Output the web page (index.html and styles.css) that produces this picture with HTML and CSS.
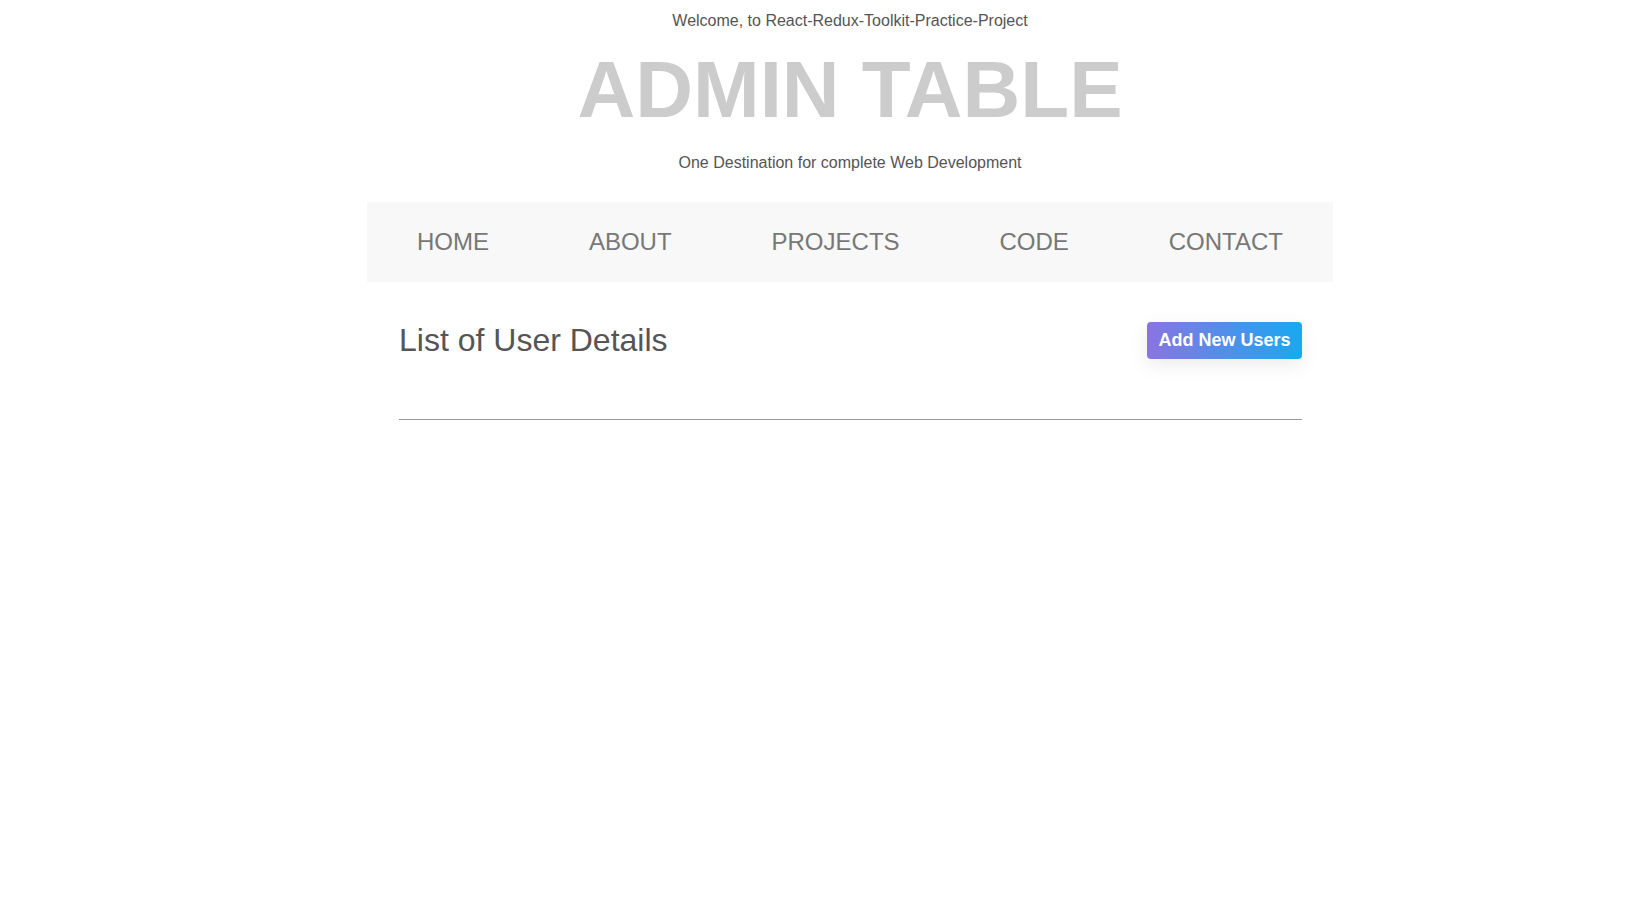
FILE: index.html
```html
<!DOCTYPE html>
<html>
<head>
<meta charset="utf-8">
<link rel="stylesheet" href="styles.css">
</head>
<body>
<div class="page">
  <header class="site-header">
    <p class="welcome">Welcome, to React-Redux-Toolkit-Practice-Project</p>
    <h1 class="title">ADMIN TABLE</h1>
    <p class="tagline">One Destination for complete Web Development</p>
  </header>
  <nav class="nav">
    <a class="nav-link" href="#">HOME</a>
    <a class="nav-link" href="#">ABOUT</a>
    <a class="nav-link" href="#">PROJECTS</a>
    <a class="nav-link" href="#">CODE</a>
    <a class="nav-link" href="#">CONTACT</a>
  </nav>
  <main class="content">
    <div class="toolbar">
      <h2 class="list-title">List of User Details</h2>
      <button class="add-btn">Add New Users</button>
    </div>
    <hr class="divider">
  </main>
</div>
</body>
</html>
```
FILE: styles.css
```css
* { box-sizing: border-box; }
body {
  margin: 0;
  background: #fff;
  font-family: "Liberation Sans", Arial, sans-serif;
}
.page {
  padding-left: 50px;
}
.site-header {
  text-align: center;
  color: #555;
}
.welcome {
  margin: 0;
  padding-top: 12px;
  font-size: 16px;
  line-height: 18px;
}
.title {
  margin: 14px 0 0;
  font-size: 80px;
  line-height: 92px;
  font-weight: bold;
  color: #cccccc;
}
.tagline {
  margin: 18px 0 0;
  font-size: 16px;
  line-height: 18px;
}
.nav {
  width: 966px;
  height: 80px;
  margin: 30px auto 0;
  background: #f8f8f8;
  display: flex;
  align-items: center;
  justify-content: space-around;
}
.nav-link {
  font-size: 24px;
  color: #777;
  text-decoration: none;
}
.content {
  width: 966px;
  margin: 0 auto;
  padding: 0 31px 0 32px;
}
.toolbar {
  display: flex;
  justify-content: space-between;
  align-items: center;
  padding-top: 40px;
}
.list-title {
  margin: 0;
  font-size: 32px;
  font-weight: normal;
  color: #555;
}
.add-btn {
  width: 155px;
  height: 37px;
  border: none;
  border-radius: 4px;
  background: linear-gradient(90deg, #8a74e2, #18a9f1);
  color: #fff;
  font-family: "Liberation Sans", Arial, sans-serif;
  font-size: 18px;
  font-weight: bold;
  box-shadow: 0 6px 20px rgba(0,0,0,0.08);
}
.divider {
  margin: 60px 0 0;
  border: none;
  border-top: 1px solid #999;
}
```
